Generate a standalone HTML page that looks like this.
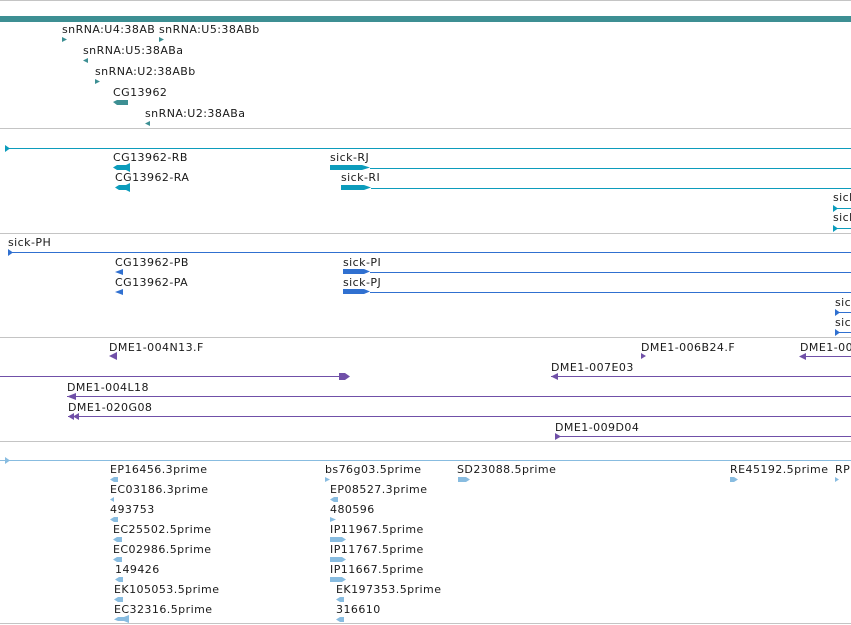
<!DOCTYPE html>
<html><head><meta charset="utf-8"><style>
body{margin:0;width:851px;height:625px;background:#fff;position:relative;overflow:hidden;font-family:"DejaVu Sans","Liberation Sans",sans-serif;font-size:11px;letter-spacing:0.45px;color:#1a1a1a}
.t{position:absolute;line-height:13px;white-space:nowrap}
.sep{position:absolute;left:0;width:851px;height:1px;background:#c4c4c4}
svg{position:absolute;left:0;top:0}
</style></head><body>
<div class="sep" style="top:0"></div>
<div style="position:absolute;left:0;top:16px;width:851px;height:6px;background:#3d8f93"></div>
<div class="sep" style="top:128px"></div>
<div class="sep" style="top:233px"></div>
<div class="sep" style="top:337px"></div>
<div class="sep" style="top:441px"></div>
<div class="sep" style="top:623px"></div>

<svg width="851" height="625">
<g fill="#3d8f93">
<polygon points="62,37 67,39.5 62,42"/>
<polygon points="159,37 164,39.5 159,42"/>
<polygon points="88,58 83,60.5 88,63"/>
<polygon points="95,79 100,81.5 95,84"/>
<polygon points="113,102 117,100 128,100 128,105 117,105"/>
<polygon points="150,121 145,123.5 150,126"/>
</g>
<g fill="#0c9cbc">
<rect x="5" y="148" width="846" height="1"/>
<polygon points="5,145 10,148.5 5,152"/>
<polygon points="113,167.5 117,165 126,165 130,163 130,172 126,170 117,170"/>
<polygon points="115,187.5 119,185 126,185 130,183 130,192 126,190 119,190"/>
<polygon points="330,165 362,165 370,167.5 362,170 330,170"/>
<rect x="370" y="168" width="481" height="1"/>
<polygon points="341,185 364,185 371,187.5 364,190 341,190"/>
<rect x="371" y="188" width="480" height="1"/>
<rect x="833" y="208" width="18" height="1"/>
<polygon points="833,205 838,208.5 833,212"/>
<rect x="833" y="228" width="18" height="1"/>
<polygon points="833,225 838,228.5 833,232"/>
</g>
<g fill="#3070d0">
<rect x="8" y="252" width="843" height="1"/>
<polygon points="8,249 13,252.5 8,256"/>
<polygon points="115,272 123,269 123,275"/>
<polygon points="115,292 123,289 123,295"/>
<polygon points="343,269 364,269 370,271.5 364,274 343,274"/>
<rect x="370" y="272" width="481" height="1"/>
<polygon points="343,289 364,289 370,291.5 364,294 343,294"/>
<rect x="370" y="292" width="481" height="1"/>
<rect x="835" y="312" width="16" height="1"/>
<polygon points="835,309 840,312.5 835,316"/>
<rect x="835" y="332" width="16" height="1"/>
<polygon points="835,329 840,332.5 835,336"/>
</g>
<g fill="#7050a8">
<polygon points="109,356 117,352 117,360"/>
<rect x="0" y="376" width="340" height="1"/>
<polygon points="339,373 345,373 350,376.5 345,380 339,380"/>
<polygon points="641,353 646,356 641,359"/>
<rect x="800" y="356" width="51" height="1"/>
<polygon points="799,356.5 806,353 806,360"/>
<rect x="551" y="376" width="300" height="1"/>
<polygon points="551,376.5 558,373 558,380"/>
<rect x="67" y="396" width="784" height="1"/>
<polygon points="67,396.5 76,393 76,400"/>
<rect x="68" y="416" width="783" height="1"/>
<polygon points="68,416.5 74,413 74,420"/><polygon points="73,416.5 79,413 79,420"/>
<rect x="555" y="436" width="296" height="1"/>
<polygon points="555,433 561,436.5 555,440"/>
</g>
<g fill="#88bce0">
<rect x="0" y="460" width="851" height="1"/>
<polygon points="5,457 10,460.5 5,464"/>
<polygon points="110,479.5 114,477 118,477 118,482 114,482"/>
<polygon points="110,499.5 114,497 114,502"/>
<polygon points="110,519.5 114,517 118,517 118,522 114,522"/>
<polygon points="113,539.5 117,537 122,537 122,542 117,542"/>
<polygon points="113,559.5 117,557 122,557 122,562 117,562"/>
<polygon points="115,579.5 119,577 123,577 123,582 119,582"/>
<polygon points="114,599.5 118,597 123,597 123,602 118,602"/>
<polygon points="114,619.5 118,617 124,617 129,615 129,623 124,621 118,621"/>
<polygon points="325,477 330,479.5 325,482"/>
<polygon points="330,499.5 334,497 338,497 338,502 334,502"/>
<polygon points="330,517 336,519.5 330,522"/>
<polygon points="330,537 342,537 346,539.5 342,542 330,542"/>
<polygon points="330,557 342,557 346,559.5 342,562 330,562"/>
<polygon points="330,577 342,577 346,579.5 342,582 330,582"/>
<polygon points="336,599.5 340,597 344,597 344,602 340,602"/>
<polygon points="336,619.5 340,617 344,617 344,622 340,622"/>
<polygon points="458,477 466,477 470,479.5 466,482 458,482"/>
<polygon points="730,477 734,477 738,479.5 734,482 730,482"/>
<polygon points="835,477 839,479.5 835,482"/>
</g>
</svg>

<div class="t" style="left:62px;top:23px">snRNA:U4:38AB</div>
<div class="t" style="left:159px;top:23px">snRNA:U5:38ABb</div>
<div class="t" style="left:83px;top:44px">snRNA:U5:38ABa</div>
<div class="t" style="left:95px;top:65px">snRNA:U2:38ABb</div>
<div class="t" style="left:113px;top:86px">CG13962</div>
<div class="t" style="left:145px;top:107px">snRNA:U2:38ABa</div>

<div class="t" style="left:113px;top:151px">CG13962-RB</div>
<div class="t" style="left:330px;top:151px">sick-RJ</div>
<div class="t" style="left:115px;top:171px">CG13962-RA</div>
<div class="t" style="left:341px;top:171px">sick-RI</div>
<div class="t" style="left:833px;top:191px">sick</div>
<div class="t" style="left:833px;top:211px">sick</div>

<div class="t" style="left:8px;top:236px">sick-PH</div>
<div class="t" style="left:115px;top:256px">CG13962-PB</div>
<div class="t" style="left:343px;top:256px">sick-PI</div>
<div class="t" style="left:115px;top:276px">CG13962-PA</div>
<div class="t" style="left:343px;top:276px">sick-PJ</div>
<div class="t" style="left:835px;top:296px">sick</div>
<div class="t" style="left:835px;top:316px">sick</div>

<div class="t" style="left:109px;top:341px">DME1-004N13.F</div>
<div class="t" style="left:641px;top:341px">DME1-006B24.F</div>
<div class="t" style="left:800px;top:341px">DME1-006</div>
<div class="t" style="left:551px;top:361px">DME1-007E03</div>
<div class="t" style="left:67px;top:381px">DME1-004L18</div>
<div class="t" style="left:68px;top:401px">DME1-020G08</div>
<div class="t" style="left:555px;top:421px">DME1-009D04</div>

<div class="t" style="left:110px;top:463px">EP16456.3prime</div>
<div class="t" style="left:110px;top:483px">EC03186.3prime</div>
<div class="t" style="left:110px;top:503px">493753</div>
<div class="t" style="left:113px;top:523px">EC25502.5prime</div>
<div class="t" style="left:113px;top:543px">EC02986.5prime</div>
<div class="t" style="left:115px;top:563px">149426</div>
<div class="t" style="left:114px;top:583px">EK105053.5prime</div>
<div class="t" style="left:114px;top:603px">EC32316.5prime</div>
<div class="t" style="left:325px;top:463px">bs76g03.5prime</div>
<div class="t" style="left:330px;top:483px">EP08527.3prime</div>
<div class="t" style="left:330px;top:503px">480596</div>
<div class="t" style="left:330px;top:523px">IP11967.5prime</div>
<div class="t" style="left:330px;top:543px">IP11767.5prime</div>
<div class="t" style="left:330px;top:563px">IP11667.5prime</div>
<div class="t" style="left:336px;top:583px">EK197353.5prime</div>
<div class="t" style="left:336px;top:603px">316610</div>
<div class="t" style="left:457px;top:463px">SD23088.5prime</div>
<div class="t" style="left:730px;top:463px">RE45192.5prime</div>
<div class="t" style="left:835px;top:463px">RP</div>
</body></html>
